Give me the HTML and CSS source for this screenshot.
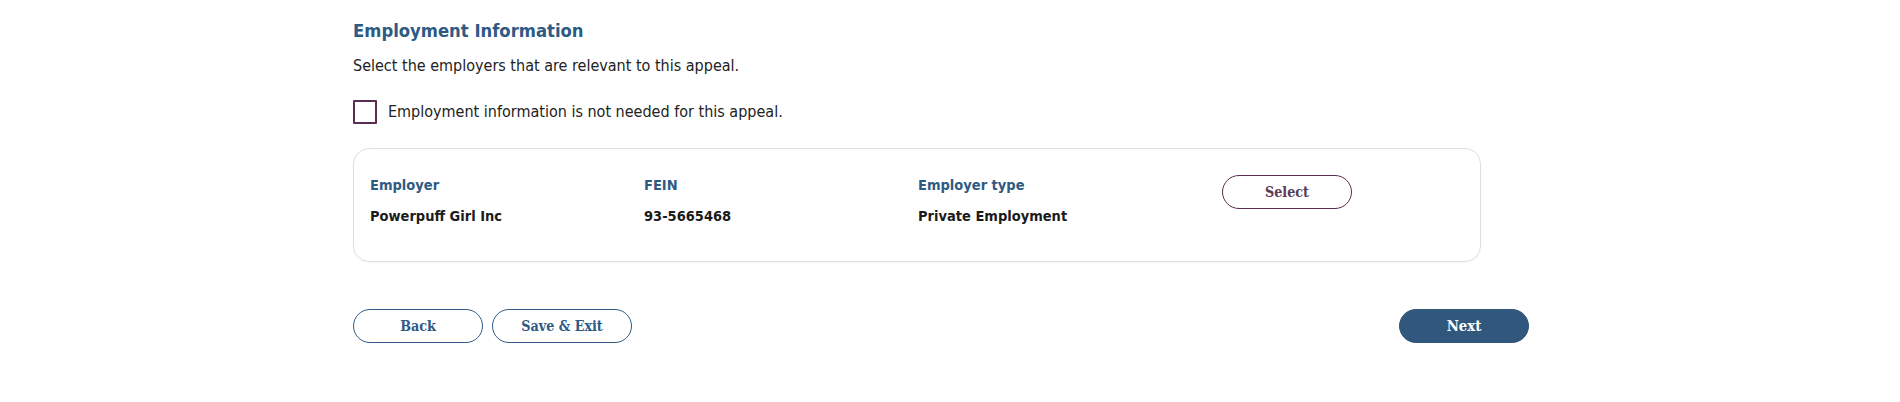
FILE: index.html
```html
<!DOCTYPE html>
<html lang="en">
<head>
<meta charset="utf-8">
<title>Employment Information</title>
<link rel="stylesheet" href="styles.css">
</head>
<body>
<main class="page">
  <h1 class="title">Employment Information</h1>
  <p class="intro">Select the employers that are relevant to this appeal.</p>
  <label class="opt-out">
    <span class="checkbox"></span>
    <span class="opt-text">Employment information is not needed for this appeal.</span>
  </label>
  <section class="card">
    <div class="grid">
      <div class="label">Employer</div>
      <div class="label">FEIN</div>
      <div class="label">Employer type</div>
      <div class="btn-cell"><button class="btn btn-select">Select</button></div>
      <div class="value">Powerpuff Girl Inc</div>
      <div class="value">93-5665468</div>
      <div class="value">Private Employment</div>
    </div>
  </section>
  <div class="actions">
    <div class="left-actions">
      <button class="btn btn-outline btn-back">Back</button>
      <button class="btn btn-outline btn-save">Save &amp; Exit</button>
    </div>
    <button class="btn btn-primary">Next</button>
  </div>
</main>
</body>
</html>
```
FILE: styles.css
```css
html, body {
  margin: 0;
  padding: 0;
  background: #ffffff;
}

body {
  font-family: "DejaVu Sans Condensed", "DejaVu Sans", sans-serif;
  font-stretch: condensed;
  color: #222222;
}

.page {
  width: 1176px;
  padding: 19px 0 0 353px;
}

.title {
  margin: 0;
  font-size: 18.3px;
  line-height: 24px;
  font-weight: 700;
  color: #2e5a84;
}

.intro {
  margin: 11px 0 0;
  font-size: 16px;
  line-height: 24px;
}

.opt-out {
  display: flex;
  align-items: center;
  gap: 11px;
  margin-top: 22px;
  font-size: 16px;
  line-height: 24px;
}

.checkbox {
  display: block;
  width: 24px;
  height: 24px;
  box-sizing: border-box;
  border: 2px solid #5b2d50;
  border-radius: 1px;
}

.card {
  margin-top: 24px;
  width: 1128px;
  box-sizing: border-box;
  border: 1px solid #dfdfdf;
  border-radius: 16px;
  padding: 26px 16px 35px;
  box-shadow: 0 1px 2px rgba(0, 0, 0, 0.04);
}

.grid {
  display: grid;
  grid-template-columns: 274px 274px 304px 130px;
  row-gap: 11px;
}

.label {
  font-size: 14.5px;
  line-height: 20px;
  font-weight: 700;
  color: #2e5a84;
}

.value {
  font-size: 14.5px;
  line-height: 20px;
  font-weight: 700;
  color: #1b1b1b;
}

.btn-cell {
  grid-row: span 2;
}

.btn {
  display: block;
  box-sizing: border-box;
  height: 34px;
  border-radius: 17px;
  background: #ffffff;
  font-family: "DejaVu Serif Condensed", "DejaVu Serif", serif;
  font-stretch: condensed;
  font-weight: 700;
  font-size: 14.2px;
  line-height: 32px;
  padding: 0;
  text-align: center;
  cursor: pointer;
}

.btn-select {
  width: 130px;
  border: 1px solid #5b2d50;
  color: #5b3a57;
}

.actions {
  margin-top: 47px;
  display: flex;
  justify-content: space-between;
  align-items: center;
}

.left-actions {
  display: flex;
  gap: 9px;
}

.btn-outline {
  border: 1px solid #2e5a84;
  color: #2e5a84;
}

.btn-back {
  width: 130px;
}

.btn-save {
  width: 140px;
}

.btn-primary {
  width: 130px;
  border: 1px solid #31577d;
  background: #31577d;
  color: #ffffff;
  font-size: 14.8px;
}
```
